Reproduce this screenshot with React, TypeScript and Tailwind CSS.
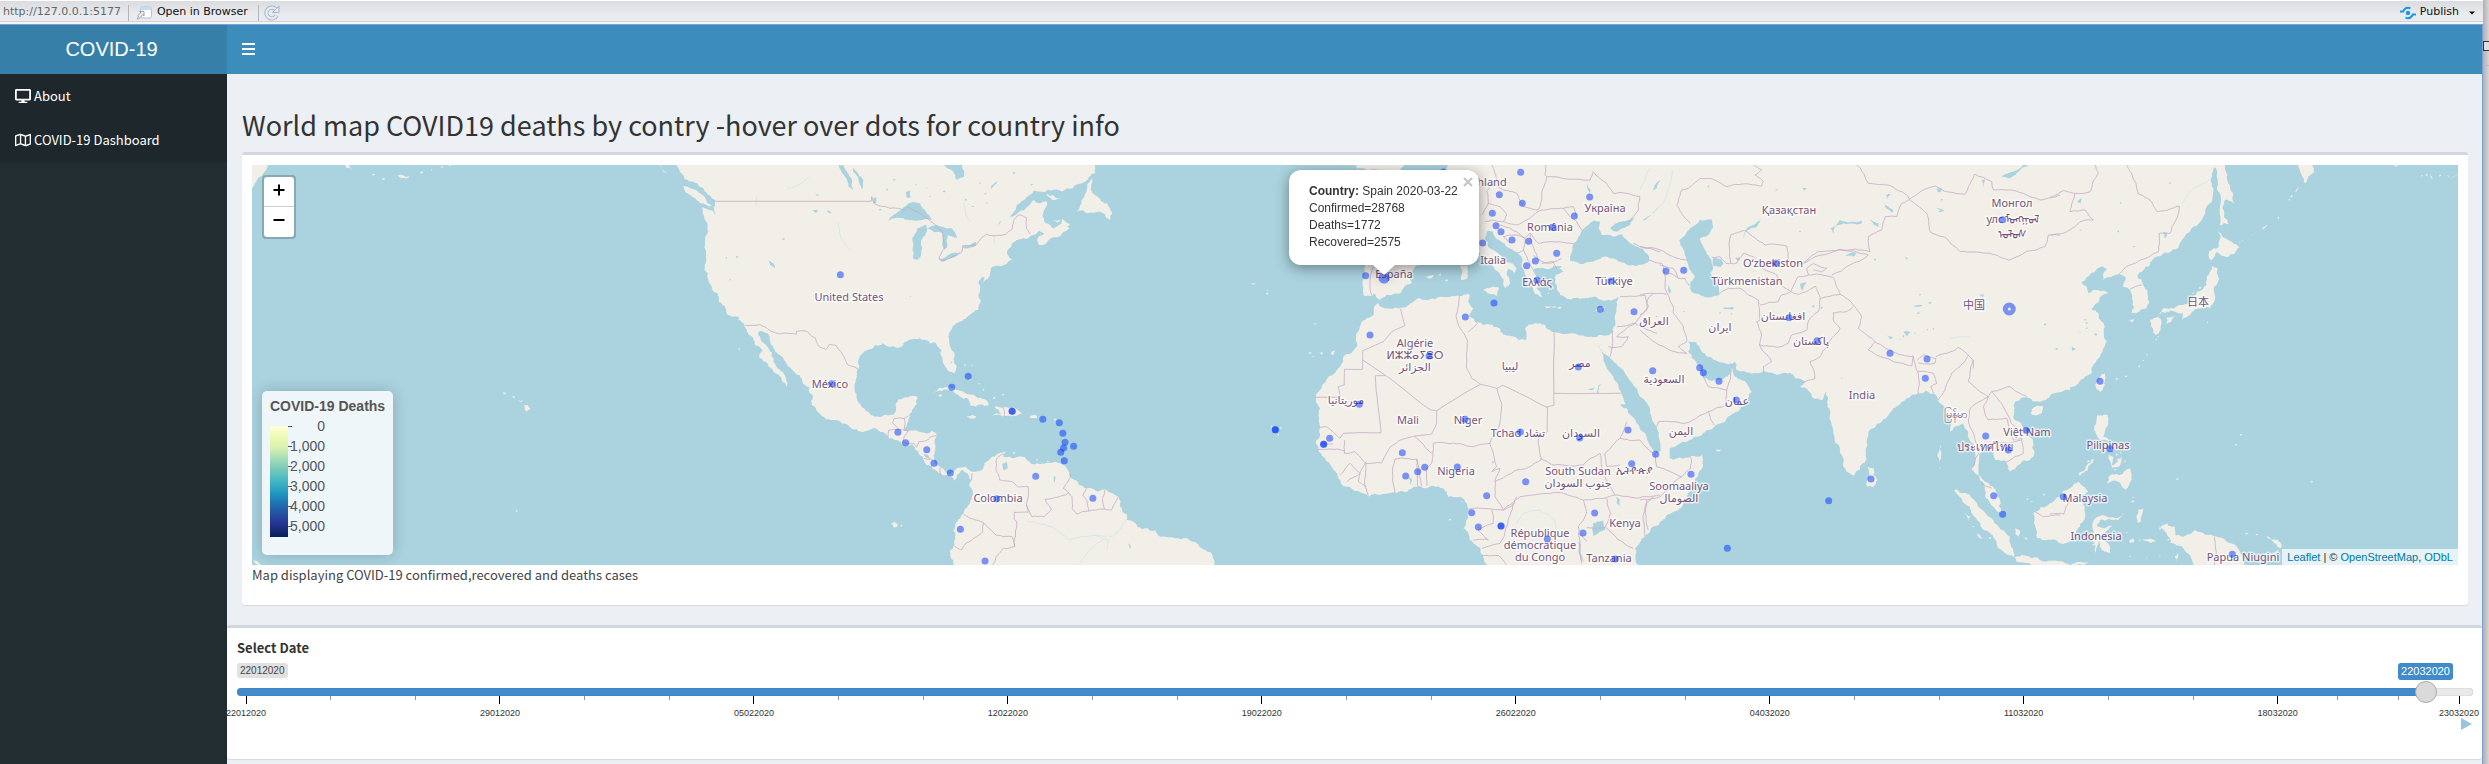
import React from "react";
import { FaDesktop, FaRegMap } from "react-icons/fa";

/* ------------------------------------------------------------------ */
/* Map geometry                                                        */
/* ------------------------------------------------------------------ */

type Sheet = { x: number; y: number; sx: number; sy: number };
type Point = [number, number];

/* The map is split into five survey sheets, each with its own grid. */
const PACIFIC: Sheet = { x: 230, y: 160, sx: 3, sy: 3 };
const AMERICAS: Sheet = { x: 680, y: 160, sx: 2.8, sy: 3 };
const AFRICA: Sheet = { x: 1240, y: 160, sx: 3, sy: 3 };
const ASIA: Sheet = { x: 1640, y: 160, sx: 3, sy: 3 };
const EAST: Sheet = { x: 2050, y: 160, sx: 3, sy: 3 };

function parse(sheet: Sheet, data: string): Point[] {
  const n = data.trim().split(/\s+/).map(Number);
  const out: Point[] = [];
  for (let i = 0; i + 1 < n.length; i += 2) {
    out.push([sheet.x + n[i] / sheet.sx, sheet.y + n[i + 1] / sheet.sy]);
  }
  return out;
}

let seed = 7;
function noise() {
  seed = (seed * 1103515245 + 12345) % 2147483648;
  return seed / 2147483648 - 0.5;
}

/* Midpoint displacement gives straight runs the look of a natural coast. */
function split(a: Point, b: Point, amount: number, depth: number): Point[] {
  const dx = b[0] - a[0];
  const dy = b[1] - a[1];
  const len = Math.hypot(dx, dy);
  if (depth === 0 || len < 2) return [b];
  const k = noise() * Math.min(amount, 5 / len);
  const m: Point = [(a[0] + b[0]) / 2 - dy * k, (a[1] + b[1]) / 2 + dx * k];
  return [...split(a, m, amount, depth - 1), ...split(m, b, amount, depth - 1)];
}

function trace(points: Point[], amount: number, closed: boolean) {
  const out: Point[] = [points[0]];
  const last = closed ? points.length : points.length - 1;
  for (let i = 0; i < last; i++) {
    out.push(...split(points[i], points[(i + 1) % points.length], amount, 3));
  }
  return "M" + out.map((p) => p[0].toFixed(1) + " " + p[1].toFixed(1)).join("L") + (closed ? "Z" : "");
}

const shape = (s: Sheet, list: string[], amount = 0.36) => list.map((d) => trace(parse(s, d), amount, true));
const line = (s: Sheet, list: string[], amount = 0.14) =>
  list.map((d) => trace(parse(s, d), amount, false)).join("");

/* Islets and ponds too small to outline. */
const specks = (s: Sheet, d: string) =>
  parse(s, d).map(([x, y]) => {
    const w = 0.8 + Math.abs(noise()) * 2;
    const h = 0.6 + Math.abs(noise()) * 2;
    return `M${(x - w).toFixed(1)} ${y.toFixed(1)}l${w.toFixed(1)} ${(-h).toFixed(1)}l${w.toFixed(1)} ${(h / 2).toFixed(1)}l${(-w).toFixed(1)} ${h.toFixed(1)}Z`;
  });

const LAND = [
  ...shape(AMERICAS, [
    "-15 0 5 40 25 65 48 75 75 105 95 120 100 165 85 150 62 142 68 175 76 205 72 270 68 330 78 340 80 365 105 400 108 425 130 458 165 472 180 492 195 525 210 555 232 570 222 592 245 610 262 635 285 660 303 682 300 665 280 630 262 600 245 560 225 535 220 515 245 520 262 565 290 595 310 625 335 645 360 680 372 712 368 735 395 765 430 780 475 800 515 815 540 805 560 815 585 835 620 850 655 858 680 890 690 915 715 930 735 945 755 950 770 962 775 945 790 930 808 945 815 960 820 1000 815 1020 795 1055 778 1080 765 1110 770 1130 768 1150 755 1175 765 1200 785 1250 1500 1250 1487 1178 1455 1160 1410 1135 1345 1130 1310 1105 1280 1100 1250 1080 1252 1062 1232 1040 1228 1012 1190 988 1140 985 1115 970 1090 940 1075 915 1050 905 1010 912 985 912 960 890 930 895 905 890 912 875 885 885 852 910 845 930 825 935 800 920 775 925 755 942 735 925 712 905 715 870 722 825 705 812 670 815 640 812 628 812 640 780 650 750 665 712 612 718 605 745 598 765 545 770 515 745 495 705 492 660 500 625 498 605 515 575 545 555 570 550 590 560 620 560 640 540 680 540 700 550 715 548 732 570 735 600 755 635 768 640 775 620 768 590 755 555 752 525 762 500 785 485 805 470 835 450 842 420 835 405 840 385 850 365 868 345 870 325 895 318 932 300 918 285 928 255 975 235 1005 212 1020 220 1000 240 1005 255 1050 232 1090 205 1075 190 1045 205 1020 185 1020 150 1028 125 990 120 950 155 890 195 925 170 950 130 990 92 1040 92 1100 85 1135 65 1162 40 1162 0",
    "8 78 30 85 70 112 90 137 65 130 35 110",
    "1155 55 1150 90 1170 110 1195 130 1210 155 1205 180 1185 160 1155 158 1105 155 1125 120 1140 75",
    "1022 100 1045 105 1066 118 1050 120",
    "1070 178 1092 192 1080 202 1068 195",
    "1045 180 1068 182 1056 188",
    "705 700 725 684 765 684 800 700 830 712 865 735 815 738 805 715 770 700 735 692",
    "880 742 930 744 958 762 940 768 915 768 870 768 900 762",
    "803 768 830 768 826 776 812 775",
    "980 767 1000 767 1000 774 981 774",
    "724 705 735 705 730 711",
    "590 1090 600 1085 610 1095 600 1103",
  ]),
  ...shape(PACIFIC, [
    "40 -10 112 0 100 40 75 70 60 90",
    "882 735 892 735 903 745 890 755 884 750",
    "820 697 828 698 826 703 820 702",
    "846 709 856 712 850 713",
    "864 719 880 722 872 726",
    "1285 0 1310 42 1298 30",
    "345 14 358 15 368 32 355 24",
    "500 48 520 46 540 50 515 54",
    "70 1198 80 1203 94 1216 80 1212",
  ]),
  ...shape(AFRICA, [
    "415 430 440 445 480 445 540 415 600 410 660 408 690 405 685 425 700 445 685 470 705 485 745 492 780 505 790 525 835 540 858 540 855 505 885 490 915 495 935 515 1000 520 1040 530 1075 525 1115 520 1125 480 1130 440 1135 410 1095 422 1060 410 1030 415 990 418 960 405 950 375 945 350 970 335 940 318 900 325 880 330 888 348 905 375 890 385 908 412 885 402 870 375 855 345 845 320 845 290 820 270 785 245 760 215 740 215 735 235 745 262 775 280 790 300 830 325 825 340 805 325 800 345 810 370 795 385 790 365 775 335 740 305 720 280 700 255 660 250 600 265 560 270 535 315 510 345 515 370 490 385 480 400 440 405 420 420 405 400 370 405 370 360 375 310 375 270 480 250 520 120 620 25 640 0 1290 0 1290 1060 1260 1085 1215 1130 1185 1165 1195 1250 740 1250 730 1190 720 1165 690 1140 670 1105 680 1080 685 1045 675 1025 660 1010 625 1010 610 985 580 978 530 980 470 1000 420 1005 385 1010 320 980 295 955 280 930 250 890 235 870 230 840 240 800 240 745 228 715 240 690 265 650 285 640 310 590 350 560 348 525 360 500 400 465",
    "340 0 520 0 480 30 400 28 350 26",
    "730 388 775 382 770 408",
    "660 320 680 316 682 355 664 360",
    "915 438 965 440 960 447 920 445",
    "1065 450 1096 440 1085 458",
    "555 350 580 345 575 355",
    "238 578 248 575 246 586",
    "272 580 285 570 280 585",
    "75 388 88 388 84 393",
    "26 368 48 370 40 374",
  ]),
  ...shape(ASIA, [
    "45 875 60 905 100 900 140 893 190 880 188 920 165 970 140 1020 100 1055 60 1080 25 1115 0 1140 -40 1180 -60 870",
    "-40 0 -40 740 0 735 30 760 45 800 50 840 60 868 100 862 150 840 200 810 255 785 290 755 310 730 335 695 320 670 285 650 278 625 262 650 235 660 205 660 185 640 170 610 145 575 145 545 170 548 185 575 220 600 255 610 285 605 290 630 340 640 400 640 450 638 465 655 495 665 480 680 520 715 545 720 558 690 562 740 580 810 600 870 620 935 640 948 660 930 680 900 685 815 720 790 760 745 800 715 835 700 880 700 893 720 920 760 935 790 930 815 970 790 985 815 1000 850 1005 880 995 930 1020 960 1035 990 1045 1020 1085 1060 1080 1020 1060 980 1030 960 1015 930 1020 880 1050 870 1065 900 1100 905 1110 935 1145 905 1180 890 1180 850 1150 810 1120 770 1125 725 1160 712 1200 725 1230 705 1290 690 1290 0",
    "1172 760 1185 740 1210 740 1195 765",
    "682 920 700 925 712 960 700 980 682 980",
    "942 990 990 1005 1020 1045 1060 1080 1110 1130 1122 1190 1095 1180 1050 1120 1010 1080 990 1040",
    "1120 1190 1170 1192 1200 1200 1250 1202 1300 1222 1290 1245 1200 1225 1130 1205",
    "1125 1105 1138 1110 1135 1130 1126 1120",
    "1150 1133 1162 1133 1160 1140",
    "974 1058 990 1070 985 1076",
    "225 868 245 870 230 874",
    "898 855 903 860 898 905 894 890",
    "1012 1118 1026 1135 1020 1136",
  ]),
  ...shape(EAST, [
    "-40 0 -40 720 0 705 50 685 80 675 125 640 150 590 170 545 165 500 145 460 125 450 150 410 175 400 140 390 115 400 95 370 115 350 150 322 170 325 160 360 205 343 225 350 220 380 240 390 245 460 290 445 295 410 280 375 262 350 300 315 320 290 350 278 385 265 430 200 480 130 485 70 500 15 500 0",
    "-50 1060 0 1030 30 1010 60 985 85 965 115 995 95 1005 105 1060 90 1100 70 1140 45 1150 0 1140 -40 1135",
    "130 1085 150 1068 210 1070 220 1058 205 1080 150 1080 140 1100 165 1105 185 1095 160 1130 180 1180 165 1175 145 1140 135 1180 125 1140",
    "325 1100 350 1090 375 1100 375 1125 400 1130 435 1110 500 1130 560 1160 575 1185 600 1250 470 1250 400 1165 360 1150 350 1120",
    "505 0 528 0 535 70 552 130 525 120 522 170 536 192 510 195 512 110 503 60",
    "505 213 535 240 568 262 530 292 500 275 485 300 475 285 490 265 505 262",
    "485 318 502 325 508 355 492 380 490 430 480 445 445 445 410 470 395 478 400 460 350 455 320 468 340 445 400 435 430 415 440 395 470 375 478 340",
    "350 472 378 465 365 485 350 492",
    "300 480 322 470 335 490 318 525 308 505",
    "745 0 795 0 792 35 765 70 755 45",
    "138 670 150 650 166 640 163 670 150 698 138 685",
    "142 765 172 765 175 790 160 830 180 845 145 835 132 810",
    "175 885 190 890 185 915 215 890 205 920 185 925",
    "170 970 175 950 210 945 240 925 245 960 228 990 205 965",
    "85 940 130 895 125 910 90 945",
    "265 1050 280 1045 272 1085 265 1090",
    "265 1142 300 1136 318 1146 285 1142",
    "238 1140 252 1138 250 1148 240 1148",
    "375 1190 384 1180 380 1205",
    "-10 1205 30 1205 20 1212",
    "60 1210 90 1206 120 1206 80 1214",
    "648 1130 672 1138 696 1160 690 1165 670 1145",
    "640 1185 670 1178 688 1162 680 1178 655 1192",
    "735 95 750 78 742 92",
    "565 250 580 238 570 246",
    "600 228 620 212 610 224",
    "635 206 652 195 642 206",
    "238 480 252 478 250 485 242 485",
    "1030 14 1044 16 1040 20",
    "1140 45 1150 55 1145 56",
    "1188 46 1225 48 1200 52",
  ]),
  ...specks(AMERICAS, "798 616 818 618 812 660 838 672 850 690 880 715 905 705 1050 780 1074 838 935 880 1000 900 1030 905 620 1098 165 480"),
  ...specks(PACIFIC, "430 45 460 58 575 38 605 30 636 22 660 16 860 1054 1528 568"),
  ...specks(AFRICA, "210 580 220 590 225 492 82 402 95 800 122 805 115 825 600 345 630 1080 665 1025 930 360 940 385 960 395 925 400 620 362"),
  ...specks(ASIA, "1050 1135 1085 1150 1162 1018 1175 1025 985 1080 1000 1100 900 925 1212 1005"),
  ...specks(EAST, "200 885 212 880 225 905 195 930 205 900 228 870 250 1012 248 1025 330 1108 355 1140 590 1122 620 1125 200 657 228 650 268 620 280 602 292 585 318 540 325 530 685 175 718 120 725 110 472 488 573 825 558 855 382 958 785 966 450 385 430 400 230 1118 210 1118 240 1190 290 1195 330 1190 1115 48 1130 46 1170 48 130 1155 90 945 115 905"),
];

const WATER = [
  ...shape(AMERICAS, [
    "730 0 760 30 775 60 795 50 790 15 795 0",
    "583 182 610 155 640 130 672 130 690 158 705 180 680 180 650 180 625 175",
    "690 195 665 205 650 235 652 295 665 300 675 285 675 240 692 212",
    "690 205 715 195 760 205 775 235 750 225 748 262 738 270 735 220",
    "725 298 760 280 792 270 770 290 735 305",
    "790 258 830 245 828 258 795 265",
    "445 15 462 50 472 80 485 90 480 55 470 40 458 15",
    "485 20 500 45 513 60 510 88 500 60 485 35",
    "248 302 262 310 266 325 255 318",
    "632 95 645 92 646 112 634 112",
    "870 80 888 62 885 72 872 88",
    "902 912 915 905 918 925 908 932",
    "682 880 695 885 700 898 686 890",
    "1045 950 1052 950 1048 970",
    "540 115 548 112 550 130 540 128",
    "375 100 390 104 384 108",
    "370 150 388 148 380 160",
    "412 150 425 158 418 160",
    "1255 1150 1262 1155 1260 1168",
    "25 66 50 72 78 104 98 120 94 132 72 110 40 80",
    "836 372 846 350 852 352 844 380",
  ], 0.22),
  ...shape(AFRICA, [
    "1070 545 1090 580 1108 590 1150 630 1200 710 1230 745 1250 800 1262 872 1250 880 1220 825 1190 785 1165 760 1145 700 1120 650 1090 600",
    "990 290 1000 250 1020 225 1045 195 1055 185 1080 185 1075 205 1085 225 1120 230 1145 222 1155 235 1190 260 1225 285 1225 305 1190 318 1140 305 1090 290 1060 305 1020 312 990 302",
    "1110 205 1140 185 1185 172 1170 195 1150 205 1130 215",
    "1058 1090 1090 1082 1095 1110 1060 1128",
    "1014 1145 1020 1150 1032 1205 1024 1200",
    "1070 695 1075 675 1082 672 1076 700",
    "1128 1010 1140 1020 1138 1040 1130 1030",
    "1238 90 1262 60 1250 85",
    "1040 70 1052 90 1050 100",
    "1208 180 1240 165 1215 180",
    "1040 690 1070 680 1058 690",
    "755 900 762 905 758 912",
    "506 950 516 958 510 974",
    "940 322 965 318 960 326",
  ], 0.22),
  ...shape(ASIA, [
    "-60 735 -10 735 0 735 30 760 45 800 50 840 60 868 50 880 20 830 -10 790 -40 745",
    "125 235 150 205 180 180 215 178 220 200 205 225 180 235 190 260 215 300 220 325 210 340 235 375 238 405 200 412 155 395 150 370 165 350 140 300 118 240",
    "-30 265 10 268 28 290 22 308 -10 315 -30 312",
    "220 292 245 298 250 310 240 322 220 318",
    "572 205 600 180 665 182 665 190 610 190 585 200 580 222",
    "615 285 650 278 640 290",
    "1085 50 1120 35 1150 15 1165 15 1140 30 1110 55",
    "692 178 715 190 714 202 700 192",
    "310 235 318 208 340 195 362 182 350 200 320 212",
    "285 295 300 290 298 303",
    "890 85 905 84 903 96 893 96",
    "1025 60 1036 58 1030 82",
    "1015 402 1032 404 1028 412",
    "730 128 760 150 758 158 738 145",
    "738 105 752 102 742 118",
    "890 145 912 150 905 156",
    "36 160 52 140 44 155",
    "486 82 500 84 492 92",
    "795 290 806 294 798 298",
    "85 375 94 395 88 402",
    "250 443 282 442 280 447 252 447",
    "820 438 848 436 830 440",
    "738 525 760 532 750 538",
    "790 515 812 516 800 530",
    "480 372 500 368 486 392",
  ], 0.22),
  ...shape(EAST, [
    "82 125 95 115 92 130",
    "340 215 352 220 345 235",
    "65 560 78 566 68 574",
    "132 520 142 522 138 530",
  ], 0.22),
  ...specks(AMERICAS, "690 85 855 102 600 60 580 90 660 75 820 140 840 70 935 40 800 120 560 150 290 238 130 295 160 292 140 360 760 608 645 410 860 130 700 110 740 95 985 75"),
  ...specks(ASIA, "862 510 880 508 840 405 835 460 870 430 545 445 520 440 132 455 275 462 240 460 410 90 205 80 480 215 790 530 825 520 780 540 705 300 905 120 900 155 50 470 605 655 1215 494"),
  ...specks(EAST, "212 130 92 211 105 480 110 490 90 517 252 260 205 215 20 568 360 70 110 505"),
];

const BORDERS =
  line(AMERICAS, ["92 124 535 124"], 0) +
  line(AMERICAS, [
    "535 124 537 110 545 132 590 145 628 150 640 142 695 178 712 192 735 215 740 265 725 295 735 302 790 275 792 257 830 255 858 223 912 223 930 208 935 180 948 165 970 172 970 205 980 222",
    "183 496 222 494 250 510 280 522 326 522 326 514 355 514 380 535 388 558 408 568 418 553 435 555 455 582 470 615 500 629",
    "600 775 628 775 628 812",
    "640 768 628 776",
    "600 775 595 788 612 808 585 810 582 833",
    "612 808 640 812 628 830 622 848",
    "622 848 655 850 662 862 668 845 690 842 700 832 722 825",
    "683 895 708 898",
    "729 920 729 945",
    "818 940 815 962",
    "905 880 885 900 885 930 895 960 930 965 945 980 975 980 970 1035 985 1070 1020 1070 1040 1047 1022 1018 1080 1005 1088 998 1073 985 1095 942",
    "1088 998 1098 1010 1098 1045 1110 1062 1145 1053",
    "1138 985 1128 1005 1140 1025 1145 1053 1185 1047 1208 1050 1226 1012",
    "1190 988 1183 1015 1188 1047",
    "970 1035 975 1057 936 1057 936 1078 943 1085 937 1160 905 1165 885 1190 875 1215",
    "795 1063 850 1088 885 1125 930 1130 937 1160",
    "850 1088 848 1115 800 1150 788 1170 768 1158",
    "905 742 908 770",
  ]) +
  line(AFRICA, [
    "942 518 942 736 922 740 922 815",
    "942 700 1145 700",
    "922 742 788 676 770 685 722 673 590 752 572 750 368 600 368 572 430 545 455 515 495 497 482 447",
    "368 600 368 628 313 628 313 675 295 680 300 712 228 712",
    "435 647 406 647 423 818 310 820 300 835 260 800 238 802",
    "590 752 590 790 575 822 523 828 480 840 450 862 425 908",
  ], 0.03) +
  line(AFRICA, [
    "722 673 695 655 680 625 682 540 648 470 658 405",
    "685 515 712 490",
    "770 685 785 730 780 790 750 850 770 920 755 935",
    "750 850 700 860 620 850 580 850 575 910 560 925 560 978",
    "575 880 523 828",
    "465 1000 465 897 530 897 545 978",
    "530 897 533 978",
    "425 908 378 910 345 875 313 880 313 840",
    "378 910 375 980 385 1010",
    "230 870 313 872",
    "240 852 280 852",
    "300 945 330 910 360 940 378 905",
    "320 965 345 950 360 940 355 965 380 980",
    "755 935 780 925 765 965 830 930 860 925 905 897 895 830 922 815",
    "765 965 765 1010 790 1050 840 1010 940 998 1000 1010 1030 1020 1125 1005 1085 920 1080 880 1030 915 940 915 900 897",
    "790 1050 685 1048",
    "755 1050 760 1090 715 1110 745 1140 700 1140",
    "790 1050 820 1035 830 1010",
    "725 1165 780 1150 800 1100 820 1030",
    "725 1187 775 1187 800 1215",
    "1140 915 1100 920 1095 880 1140 835 1160 785",
    "1140 835 1200 840 1240 880",
    "1125 1005 1220 1010 1260 1005",
    "1100 1015 1112 1060 1095 1100 1180 1165",
    "1040 1102 1095 1102",
    "1030 1020 1040 1060 1015 1100 1020 1150 1025 1210",
    "1015 1120 1040 1145",
    "1215 1130 1218 1030 1240 1010",
    "1130 500 1185 490 1225 440 1215 405 1140 410",
    "1105 560 1145 560 1165 530 1130 530 1185 490 1250 520",
    "1110 590 1118 510",
    "735 185 755 180 790 185 800 165 780 140 745 130 725 165",
    "745 130 740 95 755 70 790 90 830 100 850 140 895 150 905 100 920 50 1050 60 1060 35 1100 70 1120 100 1200 110 1195 150 1165 185",
    "755 15 770 60 760 80",
    "790 185 835 195 870 175 905 150 970 145 985 165 1010 185 1025 210",
    "970 145 1000 140 1010 170",
    "870 220 895 250 960 245 1000 250",
    "870 220 855 235 830 225 790 230 810 250",
    "870 220 880 260 895 300 930 310 965 295",
    "850 270 860 290 880 330",
    "880 285 900 300",
    "780 195 830 215 855 235 850 270 830 280",
    "925 0 915 45 920 50",
    "1180 250 1260 275",
    "905 310 940 305 950 325",
    "395 405 390 360 400 320",
  ]) +
  line(ASIA, [
    "340 15 365 30 345 45 370 65 365 78 310 72 260 80 210 55 180 55 145 85 125 90 110 135 125 160 150 190",
    "272 310 272 225 315 212 375 255 440 258 445 280 445 300 470 310 490 310 535 275",
    "272 310 290 310 310 280 340 290 375 330 410 345 420 370 452 395",
    "215 292 240 290 258 310 272 310",
    "0 260 60 270 100 290 145 300",
    "25 300 65 310 75 345 75 385 100 440 100 460 130 500 140 545 115 560 140 580 80 565 0 510",
    "60 315 100 325 115 355 90 340 75 345",
    "115 355 135 355 148 378",
    "0 405 40 400 80 403",
    "0 465 20 450 22 420 40 400",
    "238 400 265 385 300 385 355 420 360 480 350 485 365 525 358 555 385 590 395 605 370 620 370 640",
    "358 555 410 562 445 550 455 525 500 510 510 475 535 455 540 415 600 403 640 435 665 470 655 505 705 545",
    "360 435 415 425 425 405 452 395 475 403 500 395 525 378 540 412",
    "452 395 475 350 505 345 580 352 590 380 600 403",
    "505 345 500 325 520 310 560 325 545 335 520 330",
    "535 275 600 270 685 285 575 345",
    "490 310 525 290 600 268 690 275 685 230 725 210 735 170 770 170 785 130 808 118",
    "650 15 685 70 745 75 800 105 808 118 885 78 975 103 1003 43 1055 65 1060 90 1150 100 1200 120 1260 105",
    "808 118 860 160 870 215 920 235 960 275 1050 280 1108 300 1215 260 1225 225 1260 225",
    "640 440 620 455 580 458 580 480 600 505 580 530 560 560 540 590 510 605 525 655 485 668",
    "705 545 770 580 820 588 815 618 760 605 685 570 705 545",
    "832 600 850 585 888 595 885 610 835 608",
    "820 590 835 640 835 700",
    "835 635 880 640 890 670 872 680 880 700",
    "888 590 955 562 985 585 1000 600 1000 625",
    "985 585 960 620 935 640 915 690 895 720",
    "1000 600 985 665 1020 695 1045 710 1055 695 1110 680 1160 710",
    "1045 710 990 745 985 780 1000 820 1020 870 1000 920",
    "1045 710 1030 740 1045 780 1100 775 1120 840 1145 835 1150 880 1100 905",
    "1055 695 1090 740 1145 830",
    "1075 850 1145 840",
    "1075 850 1078 870",
    "1025 970 1055 985",
    "185 640 205 680 260 690 275 630",
    "260 690 262 735 205 755 130 790 55 785 50 800",
    "205 755 222 795",
    "152 890 152 925 125 950 50 920 45 880",
    "125 950 60 1010 0 1020",
    "20 1020 18 1080 25 1110",
    "1185 1055 1210 1070 1260 1065",
  ]) +
  line(EAST, [
    "135 15 145 40 120 95 70 100 40 92 0 112",
    "75 100 60 155 105 150 130 180 90 185 40 220 0 225",
    "230 15 245 40 265 102 300 120 322 155 350 152 388 138 375 185 360 220 328 220 325 275 270 300 240 315 207 343",
    "240 388 275 375",
    "0 1062 42 1062 60 1020",
    "493 1130 493 1215",
  ]);

const RIVERS =
  line(AMERICAS, [
    "445 185 450 235 470 262 478 270",
    "970 1085 1040 1100 1090 1140 1160 1125 1210 1130 1250 1080",
    "1160 1125 1200 1140 1195 1170",
    "1120 1210 1150 1165 1185 1140",
    "880 225 880 250",
    "795 128 800 165 815 185",
    "215 110 213 140",
    "360 50 330 75 300 85",
  ]) +
  line(ASIA, ["100 30 85 85 70 130 50 150", "310 235 318 208", "0 90 15 60 30 25", "930 535 990 530"]) +
  line(EAST, ["485 55 440 80 415 100 395 130"]) +
  line(AFRICA, ["830 1090 850 1060 900 1050 945 1080 950 1110"]);

const LAND_PATHS = LAND.map((d, i) => <path key={i} d={d} />);
const WATER_PATHS = WATER.map((d, i) => <path key={i} d={d} />);

/* ------------------------------------------------------------------ */
/* Case markers and country names                                      */
/* ------------------------------------------------------------------ */

const DOTS: Point[] = [
  ...parse(
    AMERICAS,
    "449 344 425 671 807 649 761 682 930 754 930 754 1016 778 1062 788 1072 820 1078 847 1102 859 1074 864 1066 877 1076 902 610 817 632 848 691 869 711 910 757 939 996 949 887 1016 1156 1015 785 1108 854 1203",
  ),
  ...parse(
    AFRICA,
    "611 36 842 37 778 104 847 130 757 160 768 197 783 215 816 240 866 244 728 249 950 280 886 303 860 317 1003 168 1049 111 937 202 1113 363 891 361 377 347 762 429 1081 448 1182 455 676 471 390 525 567 588 1015 621 358 733 675 778 841 816 1019 834 1164 810 106 809 106 809 269 835 251 853 251 853 487 878 554 922 533 935 497 948 652 921 857 965 740 1007 1175 911 695 1058 715 1101 783 1098 783 1098 1064 1059 1029 1119 922 1137 1126 1197",
  ),
  ...parse(
    ASIA,
    "78 333 131 331 408 310 447 473 531 542 38 632 179 623 190 638 237 664 289 720 47 883 153 943 262 1165 566 1022 693 957 750 580 861 597 856 655 1088 179 1037 828 1105 870 1159 811 1061 1007 1088 1063",
  ),
  ...parse(EAST, "150 664 180 866 40 1010 547 1183"),
];

const LABELS: [number, number, string][] = [
  [849, 301, "United States"],
  [830, 388, "México"],
  [998, 502, "Colombia"],
  [1492, 186, "hland"],
  [1605, 212, "Україна"],
  [1550, 231, "România"],
  [1493, 264, "Italia"],
  [1394, 278, "España"],
  [1537, 286, "Ελλάς"],
  [1614, 285, "Türkiye"],
  [1415, 347, "Algérie"],
  [1415, 359, "ⵍⵣⵣⴰⵢⴻⵔ"],
  [1415, 371, "الجزائر"],
  [1510, 370, "ليبيا"],
  [1580, 367, "مصر"],
  [1346, 404, "موريتانيا"],
  [1408, 424, "Mali"],
  [1468, 424, "Niger"],
  [1518, 437, "Tchad تشاد"],
  [1581, 437, "السودان"],
  [1456, 475, "Nigeria"],
  [1578, 475, "South Sudan"],
  [1578, 487, "جنوب السودان"],
  [1634, 474, "ኢትዮጵያ"],
  [1625, 527, "Kenya"],
  [1540, 537, "République"],
  [1540, 549, "démocratique"],
  [1540, 561, "du Congo"],
  [1609, 562, "Tanzania"],
  [1654, 325, "العراق"],
  [1664, 383, "السعودية"],
  [1720, 331, "ايران"],
  [1737, 405, "عمان"],
  [1681, 435, "اليمن"],
  [1679, 490, "Soomaaliya"],
  [1679, 502, "الصومال"],
  [1789, 214, "Қазақстан"],
  [1773, 267, "Oʻzbekiston"],
  [1747, 285, "Türkmenistan"],
  [1783, 320, "افغانستان"],
  [1811, 345, "پاکستان"],
  [1862, 399, "India"],
  [1955, 418, "မြန်မာ"],
  [2027, 436, "Việt Nam"],
  [1985, 451, "ประเทศไทย"],
  [2012, 207, "Монгол"],
  [1995, 223, "улс"],
  [2022, 223, "ᠮᠣᠩᠭᠣᠯ"],
  [2012, 238, "ᠤᠯᠤᠰ"],
  [1974, 309, "中国"],
  [2198, 306, "日本"],
  [2108, 449, "Pilipinas"],
  [2085, 502, "Malaysia"],
  [2096, 540, "Indonesia"],
  [2243, 561, "Papua Niugini"],
];

function WorldMap() {
  return (
    <svg
      viewBox="252 165 2206 400"
      preserveAspectRatio="xMidYMid slice"
      className="block h-full w-full bg-[#aad3df]"
      role="img"
      aria-label="World map of COVID-19 cases"
    >
      <g fill="#f2efe9">{LAND_PATHS}</g>
      <g fill="#aad3df">{WATER_PATHS}</g>
      <path d={RIVERS} fill="none" stroke="#cfe2e4" strokeWidth="0.7" />
      <path d={BORDERS} fill="none" stroke="#c4abc4" strokeWidth="0.8" />
      <g
        className="[font-family:'Noto_Sans','Noto_Sans_CJK_SC','DejaVu_Sans',sans-serif] text-[11px]"
        fill="#75557c"
        stroke="#ffffff"
        strokeOpacity="0.65"
        strokeWidth="3"
        strokeLinejoin="round"
        textAnchor="middle"
        paintOrder="stroke"
      >
        {LABELS.map(([x, y, t]) => (
          <text key={t} x={x} y={y}>
            {t}
          </text>
        ))}
      </g>
      <g fill="#0033ff" fillOpacity="0.5">
        {DOTS.map(([x, y], i) => (
          <circle key={i} cx={x} cy={y} r="3.5" />
        ))}
        <circle cx="1384" cy="278" r="5.5" />
      </g>
      <circle cx="2009.3" cy="309" r="4" fill="none" stroke="#0033ff" strokeOpacity="0.5" strokeWidth="5" />
    </svg>
  );
}

/* ------------------------------------------------------------------ */
/* Map overlays                                                        */
/* ------------------------------------------------------------------ */

function ZoomControl() {
  return (
    <div className="absolute top-[10px] left-[10px] rounded border-2 border-black/20">
      <button aria-label="Zoom in" className="flex h-[30px] w-[30px] items-center justify-center rounded-t-sm border-b border-[#ccc] bg-white pb-1">
        <svg width="12" height="12" viewBox="0 0 12 12" stroke="#000" strokeWidth="2">
          <path d="M6 0.5V11.5M0.5 6H11.5" />
        </svg>
      </button>
      <button aria-label="Zoom out" className="flex h-[30px] w-[30px] items-center justify-center rounded-b-sm bg-white pb-1">
        <svg width="12" height="12" viewBox="0 0 12 12" stroke="#000" strokeWidth="2">
          <path d="M0.5 6H11.5" />
        </svg>
      </button>
    </div>
  );
}

function Legend() {
  const values = ["0", "1,000", "2,000", "3,000", "4,000", "5,000"];
  return (
    <div className="absolute bottom-[10px] left-[10px] h-[164px] rounded-[5px] bg-white/80 px-2 py-[6px] text-sm leading-[18px] text-[#555] shadow-[0_0_15px_rgba(0,0,0,0.2)]">
      <div className="font-bold">COVID-19 Deaths</div>
      <div className="mt-[11px] flex">
        <div className="h-[111px] w-[18px] bg-[linear-gradient(to_bottom,#ffffd9,#edf8b1_11%,#d6efb3_20%,#7fcdbb_37%,#41b6c4_50%,#1d91c0_62%,#225ea8_75%,#253494_88%,#081d58)]" />
        <ul className="-mt-[10px] w-[37px]">
          {values.map((v) => (
            <li key={v} className="relative flex h-5 items-center justify-end">
              <span className="absolute top-[10px] left-0 h-px w-1 bg-[#555]" />
              {v}
            </li>
          ))}
        </ul>
      </div>
    </div>
  );
}

function Popup() {
  return (
    <div className="absolute top-[5px] left-[calc(50%+29px)] -translate-x-1/2 drop-shadow-[0_3px_7px_rgba(0,0,0,0.4)]">
      <div className="relative h-[95px] w-[190px] rounded-xl bg-white pt-[13px] pl-5 text-xs leading-[17px] text-[#333]">
        <p>
          <b>Country:</b> Spain 2020-03-22
        </p>
        <p>Confirmed=28768</p>
        <p>Deaths=1772</p>
        <p>Recovered=2575</p>
        <button aria-label="Close popup" className="absolute top-[7px] right-[6px] text-[#c3c3c3]">
          <svg width="10" height="10" viewBox="0 0 10 10" stroke="currentColor" strokeWidth="2">
            <path d="M1 1L9 9M9 1L1 9" />
          </svg>
        </button>
      </div>
      <svg className="mx-auto block" width="24" height="12" viewBox="0 0 24 12">
        <path d="M1 0H23L12 10Z" fill="#fff" />
      </svg>
    </div>
  );
}

function Attribution() {
  return (
    <div className="absolute right-0 bottom-0 bg-white/70 px-[5px] text-[11px] leading-4 text-[#333]">
      <a href="#leaflet" className="text-[#0078a8]">Leaflet</a> | ©{" "}
      <a href="#osm" className="text-[#0078a8]">OpenStreetMap</a>,{" "}
      <a href="#odbl" className="text-[#0078a8]">ODbL</a>
    </div>
  );
}

/* ------------------------------------------------------------------ */
/* Date slider                                                         */
/* ------------------------------------------------------------------ */

const WEEKS = [
  "22012020",
  "29012020",
  "05022020",
  "12022020",
  "19022020",
  "26022020",
  "04032020",
  "11032020",
  "18032020",
];

function TickLabel({ text }: { text: string }) {
  return (
    <div className="flex w-0 justify-center">
      <div className="flex flex-col items-center">
        <span className="h-2 w-px bg-black" />
        <span className="mt-[3px] text-[9px] leading-3 text-[#333]">{text}</span>
      </div>
    </div>
  );
}

function DateSlider() {
  return (
    <div className="pr-[9px] pl-[10px]">
      <label htmlFor="date" className="block pt-[10px] text-[13px] leading-5 font-bold text-[#333] [font-family:'Noto_Sans_CJK_SC',sans-serif]">
        Select Date
      </label>
      <div className="mt-[5px] flex h-[18px] items-start justify-between pr-5">
        <span className="rounded-[3px] bg-[#e1e1e1] px-[3px] text-[10px] leading-[15px] text-[#444]">22012020</span>
        <output htmlFor="date" className="rounded-[3px] bg-[#428bca] px-[3px] text-[11px] leading-[17px] text-white">
          22032020
        </output>
      </div>
      <input
        id="date"
        type="range"
        min={0}
        max={61}
        defaultValue={60}
        className="mt-[7px] block h-2 w-full appearance-none rounded-full bg-[linear-gradient(to_right,#428bca_98%,#e9e9e9_98%)] shadow-[inset_0_0_1px_rgba(0,0,0,0.4)] [&::-webkit-slider-thumb]:h-[22px] [&::-webkit-slider-thumb]:w-[22px] [&::-webkit-slider-thumb]:appearance-none [&::-webkit-slider-thumb]:rounded-full [&::-webkit-slider-thumb]:border [&::-webkit-slider-thumb]:border-[#aaa] [&::-webkit-slider-thumb]:bg-[#dadada]"
      />
      <div className="flex h-6 pr-[14px] pl-[9px] whitespace-nowrap">
        {WEEKS.map((w, i) => (
          <div key={w} className={i === 8 ? "flex flex-5" : "flex flex-7"}>
            <TickLabel text={w} />
            <div className="flex h-1 flex-1 justify-evenly">
              <span className="w-px bg-[#999]" />
              <span className="w-px bg-[#999]" />
            </div>
          </div>
        ))}
        <TickLabel text="23032020" />
      </div>
      <div className="flex h-[39px] items-start justify-end pr-px">
        <button aria-label="Play" className="-mt-[2px] block text-[#9bc4de]">
          <svg width="11" height="12" viewBox="0 0 11 12" fill="currentColor">
            <path d="M0 0L11 6L0 12Z" />
          </svg>
        </button>
      </div>
    </div>
  );
}

/* ------------------------------------------------------------------ */
/* Page chrome                                                         */
/* ------------------------------------------------------------------ */

function Toolbar() {
  return (
    <div className="flex h-[25px] items-center border-t border-b border-t-white border-b-[#7f9fd8] bg-[linear-gradient(to_bottom,#dadce0,#e9ebee_60%,#e9ebee_88%,#d0d2d6_88%,#d0d2d6_92%,#f4f5f7_92%)] pr-2 pl-[3px] text-[11px] [font-family:'DejaVu_Sans',sans-serif]">
      <span className="text-[#666]">http://127.0.0.1:5177</span>
      <span className="ml-[7px] h-4 w-px bg-[#b4b6ba]" />
      <button className="ml-[7px] flex items-center gap-[5px] text-[#111]">
        <svg width="16" height="14" viewBox="0 0 16 14">
          <rect x="4.5" y="1" width="11" height="11" rx="1.5" fill="#fbfcfe" stroke="#a9c4dc" />
          <path d="M4.5 2.5a1.5 1.5 0 0 1 1.5-1.5h8a1.5 1.5 0 0 1 1.5 1.5V4h-11z" fill="#c6ddf0" />
          <path d="M1 12.5L2.5 11L1.8 9.5L5 6.5L3.5 5.5H8V10L6.8 8.5L4 11.8L2.2 13z" fill="#eef0f2" stroke="#8b949d" strokeWidth="0.8" />
        </svg>
        Open in Browser
      </button>
      <span className="ml-[10px] h-4 w-px bg-[#b4b6ba]" />
      <button aria-label="Reload" className="ml-[5px]">
        <svg width="16" height="16" viewBox="0 0 16 16" fill="none">
          <path d="M12.6 10.5A5.4 5.4 0 1 1 11.6 4.2" stroke="#a9b6c6" strokeWidth="4.2" />
          <path d="M15 1V7.5H8.5Z" fill="#e6ebf2" stroke="#a9b6c6" />
          <path d="M12.6 10.5A5.4 5.4 0 1 1 11.6 4.2" stroke="#e6ebf2" strokeWidth="2.4" />
        </svg>
      </button>
      <button className="ml-auto flex items-center gap-1 text-[#111]">
        <svg width="16" height="14" viewBox="0 0 16 14" fill="none" stroke="#1b98e0" strokeWidth="2">
          <circle cx="8" cy="7" r="2.2" fill="#1b98e0" stroke="none" />
          <path d="M0 5.5H3.2C4.5 2.5 7 1.2 10.5 2.2" />
          <path d="M16 8.5H12.8C11.5 11.5 9 12.8 5.5 11.8" />
        </svg>
        Publish
      </button>
      <button aria-label="Publish options" className="ml-[10px]">
        <svg width="6" height="4" viewBox="0 0 6 4">
          <path d="M0 0.5H6L3 3.5Z" fill="#111" />
        </svg>
      </button>
    </div>
  );
}

function Sidebar() {
  return (
    <aside className="flex w-[227px] shrink-0 flex-col bg-[#222d32] text-white">
      <h1 className="flex h-[49px] items-center justify-center bg-[#367fa9] pr-1 pb-[2px] text-xl">COVID-19</h1>
      <nav className="flex flex-col bg-[#1e282c] text-[13px] leading-5 [font-family:'Noto_Sans_CJK_SC',sans-serif]">
        <a href="#about" className="flex h-11 items-center gap-[3px] pl-[15px]">
          <FaDesktop size={16} />
          About
        </a>
        <a href="#dashboard" className="flex h-11 items-center gap-[3px] pl-[15px]">
          <FaRegMap size={16} />
          COVID-19 Dashboard
        </a>
      </nav>
    </aside>
  );
}

export default function App() {
  return (
    <div className="flex min-h-screen overflow-hidden bg-[#ecf0f5] [font-family:'Liberation_Sans',Arial,sans-serif]">
      <div className="flex min-w-0 flex-1 flex-col">
        <Toolbar />
        <div className="flex flex-1 border-r border-[#7f9fd8]">
          <Sidebar />
          <div className="min-w-0 flex-1 bg-[#ecf0f5]">
            <header className="flex h-[49px] items-center bg-[#3c8dbc] pb-[2px] pl-[15px]">
              <button aria-label="Toggle navigation">
                <svg width="13" height="12" viewBox="0 0 13 12" fill="#fff">
                  <path d="M0 0h13v2H0zM0 5h13v2H0zM0 10h13v2H0z" />
                </svg>
              </button>
            </header>
            <main>
              <section className="pr-[14px] pl-[15px]">
                <h2 className="pt-[31px] pb-[7px] text-[27px] leading-10 text-[#333] [font-family:'Noto_Sans_CJK_SC',sans-serif]">
                  World map COVID19 deaths by contry -hover over dots for country info
                </h2>
                <div className="rounded-[3px] border-t-[3px] border-[#d2d6de] bg-white p-[10px] pb-[25px] shadow-[0_1px_1px_rgba(0,0,0,0.1)]">
                  <div className="relative h-[400px] overflow-hidden">
                    <WorldMap />
                    <ZoomControl />
                    <Legend />
                    <Popup />
                    <Attribution />
                  </div>
                  <p className="h-[15px] text-[13px] leading-5 text-[#444] [font-family:'Noto_Sans_CJK_SC',sans-serif]">
                    Map displaying COVID-19 confirmed,recovered and deaths cases
                  </p>
                </div>
              </section>
              <section className="mt-5 rounded-[3px] border-t-[3px] border-[#d2d6de] bg-white shadow-[0_1px_1px_rgba(0,0,0,0.1)]">
                <DateSlider />
              </section>
            </main>
          </div>
        </div>
      </div>
      <div className="flex w-[6px] shrink-0 flex-col bg-[linear-gradient(to_right,#b0b0b0,#d6d6d6)] pt-[41px]">
        <div className="h-[10px] border-y border-l border-[#333] bg-[#ddd]" />
        <div className="mt-[14px] h-px bg-[#bbb]" />
      </div>
    </div>
  );
}
